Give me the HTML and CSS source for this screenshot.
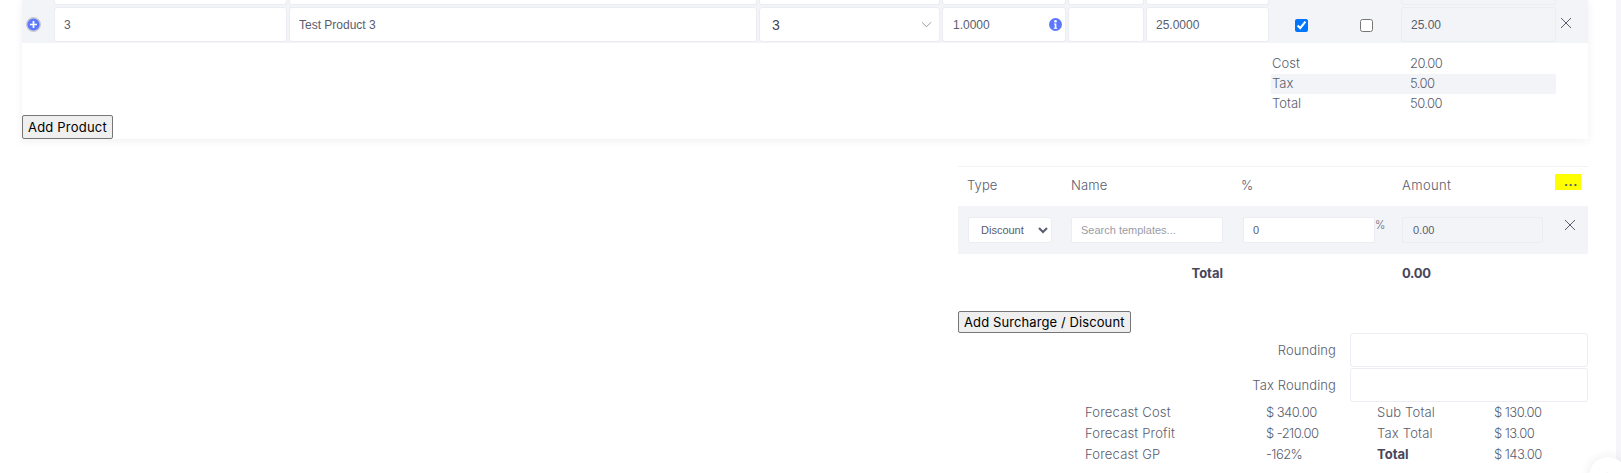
FILE: index.html
```html
<!DOCTYPE html>
<html lang="en">
<head>
<meta charset="utf-8">
<title>Quote products</title>
<link rel="stylesheet" href="styles.css">
</head>
<body>
<div class="page">
  <main class="main">
    <section class="card">
      <div class="line line-clipped">
        <span></span>
        <div class="stub"></div><div class="stub"></div><div class="stub"></div><div class="stub"></div><div class="stub"></div><div class="stub"></div>
        <span></span><span></span>
        <div class="stub stub-grey"></div>
        <span></span>
      </div>
      <div class="line line-main">
        <button class="expand" type="button" aria-label="Expand">
          <svg viewBox="0 0 15 15" width="15" height="15"><circle cx="7.5" cy="7.5" r="6.8" fill="#5d78ff" stroke="#c9cbd3" stroke-width="1.4"/><path d="M7.5 4v7M4 7.5h7" stroke="#fff" stroke-width="1.7"/></svg>
        </button>
        <input class="field" value="3">
        <input class="field" value="Test Product 3">
        <div class="field field-select">
          <span>3</span>
          <svg viewBox="0 0 12 7" width="11" height="7"><path d="M1 1l5 5 5-5" fill="none" stroke="#8d9099" stroke-width="1"/></svg>
        </div>
        <div class="field field-qty">
          <span>1.0000</span>
          <svg viewBox="0 0 12 12" width="13" height="13"><circle cx="6" cy="6" r="6" fill="#5d78ff"/><circle cx="6" cy="3" r="1.2" fill="#fff"/><path d="M4.6 5h2.2v4h.8v1H4.4V9h.9V6h-.7z" fill="#fff"/></svg>
        </div>
        <input class="field">
        <input class="field" value="25.0000">
        <label class="check"><input type="checkbox" checked></label>
        <label class="check"><input type="checkbox"></label>
        <input class="field field-grey" value="25.00" readonly>
        <button class="close" type="button" aria-label="Remove">
          <svg viewBox="0 0 12 12" width="12" height="12"><path d="M1 1l10 10M11 1L1 11" stroke="#595d6e" stroke-width="1" fill="none"/></svg>
        </button>
      </div>
      <dl class="summary">
        <div class="summary-row"><dt>Cost</dt><dd class="num">20.00</dd></div>
        <div class="summary-row summary-alt"><dt>Tax</dt><dd class="num">5.00</dd></div>
        <div class="summary-row"><dt>Total</dt><dd class="num">50.00</dd></div>
      </dl>
      <button class="btn" type="button">Add Product</button>
    </section>

    <section class="extras">
      <div class="extras-grid extras-head">
        <div class="pad-first">Type</div>
        <div>Name</div>
        <div>%</div>
        <div class="amount-head">Amount</div>
        <button class="more" type="button">...</button>
      </div>
      <div class="extras-grid extras-row">
        <div class="pad-select">
          <select class="select"><option>Discount</option></select>
        </div>
        <div><input class="small-input search" placeholder="Search templates..."></div>
        <div class="pct"><input class="small-input pct-input" value="0"><span class="pct-sign">%</span></div>
        <div><input class="small-input amount" value="0.00" readonly></div>
        <button class="close close-extra" type="button" aria-label="Remove">
          <svg viewBox="0 0 12 12" width="12" height="12"><path d="M1 1l10 10M11 1L1 11" stroke="#595d6e" stroke-width="1" fill="none"/></svg>
        </button>
      </div>
      <div class="extras-grid extras-total">
        <div class="total-label">Total</div>
        <div class="total-value">0.00</div>
      </div>
      <button class="btn btn-sur" type="button">Add Surcharge / Discount</button>

      <div class="round-row"><label>Rounding</label><input class="round-input"></div>
      <div class="round-row round-second"><label>Tax Rounding</label><input class="round-input"></div>

      <div class="totals">
        <div class="lbl">Forecast Cost</div><div class="num">$ 340.00</div><div class="lbl">Sub Total</div><div class="num">$ 130.00</div>
        <div class="lbl">Forecast Profit</div><div class="num">$ -210.00</div><div class="lbl">Tax Total</div><div class="num">$ 13.00</div>
        <div class="lbl">Forecast GP</div><div class="num">-162%</div><div class="strong">Total</div><div class="num">$ 143.00</div>
      </div>
    </section>
  </main>
  <aside class="rail"></aside>
  <button class="to-top" type="button" aria-label="Back to top">
    <svg viewBox="0 0 14 14" width="14" height="14"><path d="M7 13V2M2 7l5-5 5 5" fill="none" stroke="#c5c7d0" stroke-width="2"/></svg>
  </button>
</div>
</body>
</html>
```
FILE: styles.css
```css
* { box-sizing: border-box; }
html, body { margin: 0; height: 100%; background: #fff; }
body { overflow: hidden; font-family: Inter, "Noto Sans", sans-serif; font-weight: 300; font-size: 13px; color: #595d6e; }
.page { display: flex; height: 473px; position: relative; overflow: hidden; }
.main { width: 1616px; padding: 0 28px 0 22px; }
.rail { width: 5px; background: #f6f6fa; }

.card { height: 139px; background: #fff; box-shadow: 0 2px 8px rgba(82, 63, 105, .08); }
.line {
  display: grid;
  grid-template-columns: 30px 233px 468px 181px 124px 76px 123px 60px 66px 155px 28px;
  column-gap: 2px;
  background: #f3f4f8;
}
.line-clipped { height: 7px; padding-bottom: 2px; }
.line-main { height: 36px; padding-bottom: 1px; align-items: center; }
.stub { height: 5px; background: #fff; border: 1px solid #ebedf2; border-top: 0; border-radius: 0 0 3px 3px; }
.stub-grey { background: #f3f4f8; }

.field {
  height: 35px;
  width: 100%;
  padding: 0 9px;
  border: 1px solid #ebedf2;
  border-radius: 3px;
  background: #fff;
  font: 400 12px "Liberation Sans", Arial, sans-serif;
  color: #595d6e;
  outline: 0;
}
.field-select { display: flex; align-items: center; justify-content: space-between; padding: 0 7px 0 12px; font-size: 14px; color: #44464f; }
.field-qty { display: flex; align-items: center; justify-content: space-between; padding: 0 3px 0 10px; }
.field-grey { background: #f3f4f8; padding-left: 9px; }

.expand { display: flex; justify-content: center; padding: 0; margin: 0 0 0 4px; width: 15px; height: 15px; border: 0; background: none; }
.check { display: flex; justify-content: center; align-items: center; height: 33px; padding-top: 1px; }
.check input { margin: 0; width: 13px; height: 13px; }
.close { display: flex; padding: 0; border: 0; background: none; width: 12px; height: 12px; margin: 0 0 4px 2px; }

.num { letter-spacing: -.55px; }
.lbl { letter-spacing: .18px; }

.summary { margin: 11px 32px 0 auto; width: 285px; }
.summary-row { display: grid; grid-template-columns: 138px 1fr; height: 20px; line-height: 18px; padding-left: 1px; }
.summary-row dt, .summary-row dd { margin: 0; }
.summary-alt { background: #f3f4f8; line-height: 19px; }

.btn {
  display: block;
  margin: 1px 0 0;
  height: 24px;
  padding: 0 5px;
  border: 1px solid #767676;
  border-radius: 2px;
  background: #efefef;
  font: 400 13px Inter, "Noto Sans", sans-serif;
  letter-spacing: .2px;
  color: #000;
}

.extras { margin: 27px 0 0 936px; width: 630px; }
.extras-grid { display: grid; grid-template-columns: 113px 170px 161px 153px 33px; }
.extras-head { height: 40px; padding-bottom: 3px; border-top: 1px solid #f1f2f6; align-items: center; letter-spacing: .1px; }
.pad-first { padding-left: 9px; }
.amount-head { letter-spacing: .4px; }
.more {
  align-self: start;
  margin-top: 7px;
  width: 26px;
  height: 16px;
  padding: 0 3px 0 0;
  border: 0;
  background: #ff0;
  font: 700 13px "Liberation Sans", Arial, sans-serif;
  line-height: 14px;
  text-align: right;
  letter-spacing: 1px;
  color: #595d6e;
}
.extras-row { height: 48px; background: #f3f4f8; align-items: center; }
.pad-select { padding-left: 10px; }
.select {
  width: 84px;
  height: 26px;
  padding: 0 0 0 8px;
  border: 1px solid #ebedf2;
  border-radius: 3px;
  background: #fff;
  font: 400 11px "Liberation Sans", Arial, sans-serif;
  color: #595d6e;
}
.small-input {
  height: 26px;
  padding: 0 9px;
  border: 1px solid #ebedf2;
  border-radius: 2px;
  background: #fff;
  font: 400 11px "Liberation Sans", Arial, sans-serif;
  color: #595d6e;
  outline: 0;
}
.small-input::placeholder { color: #9a9ca6; }
.search { width: 152px; margin-left: 0; }
.pct { display: flex; align-items: flex-start; }
.pct-input { width: 132px; margin-left: 2px; }
.pct-sign { margin: 1px 0 0 0; font-size: 11px; line-height: 14px; }
.amount { width: 141px; margin-left: 0; background: #f3f4f8; padding-left: 10px; }
.close-extra { margin: 0 0 10px 9px; }

.extras-total { height: 38px; align-items: center; font-weight: 700; color: #48465b; }
.total-label { grid-column: 1 / 3; text-align: right; width: 265px; }
.total-value { grid-column: 4; letter-spacing: -.3px; }
.btn-sur { margin: 19px 0 0; height: 22px; letter-spacing: .1px; }

.round-row { display: grid; grid-template-columns: 378px 238px; column-gap: 14px; height: 34px; align-items: center; }
.round-row label { text-align: right; letter-spacing: .1px; }
.round-second { margin-top: 1px; }
.round-input { height: 34px; width: 100%; border: 1px solid #ebedf2; border-radius: 3px; background: #fff; outline: 0; }

.totals {
  display: grid;
  grid-template-columns: 181px 111px 117px 94px;
  grid-auto-rows: 21.2px;
  margin: 1px 0 0 127px;
  line-height: 19px;
}
.strong { font-weight: 700; color: #48465b; }

.to-top {
  position: absolute;
  left: 1589px;
  top: 457px;
  width: 38px;
  height: 38px;
  padding: 9px 0 0 11px;
  border: 0;
  border-radius: 50%;
  background: #fff;
  box-shadow: 0 0 10px rgba(82, 63, 105, .12);
  display: block;
  text-align: left;
}
```
